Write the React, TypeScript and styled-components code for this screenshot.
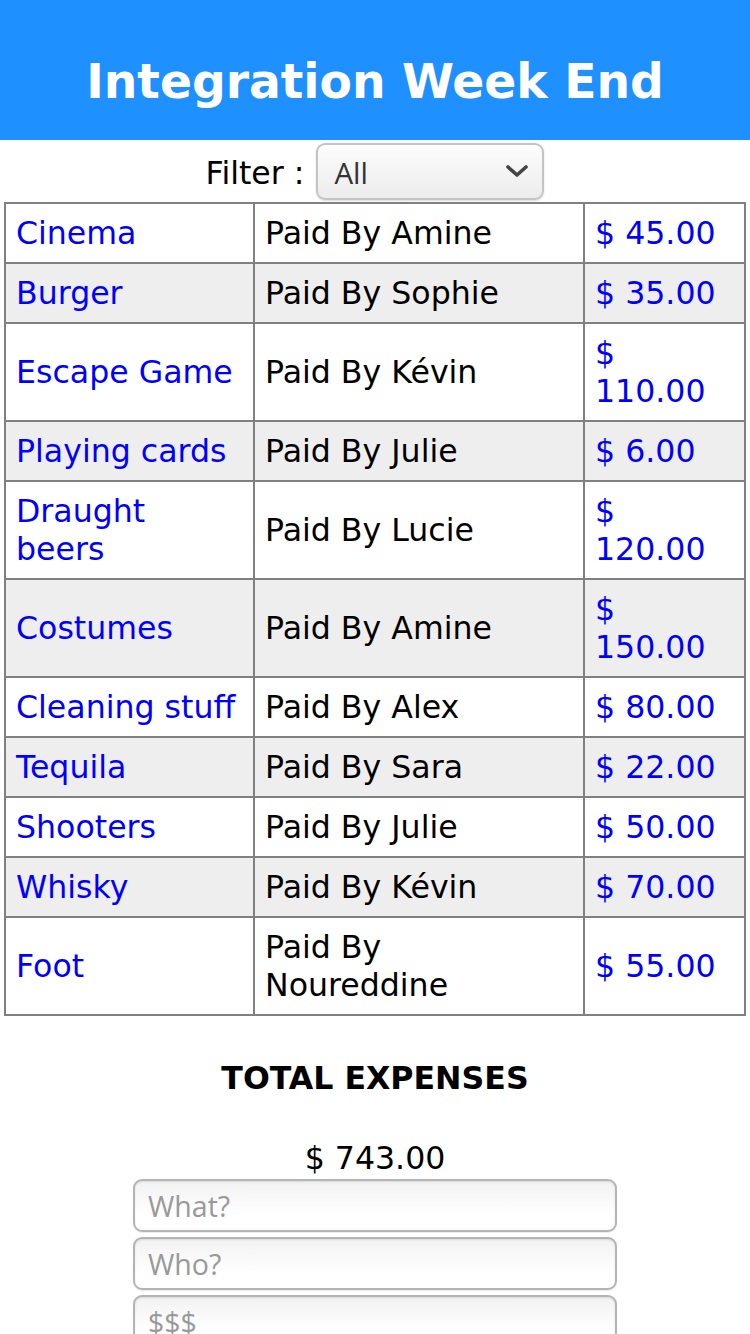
import React from "react";
import styled, { createGlobalStyle } from "styled-components";

const Global = createGlobalStyle`
  html, body { margin: 0; padding: 0; background: #fff; }
  body { font-family: "DejaVu Sans", Verdana, sans-serif; font-size: 31.6px; color: #000; }
  * { box-sizing: border-box; }
`;

const Header = styled.header`
  background: #1e90ff;
  height: 140px;
  padding-top: 54px;
  text-align: center;
`;

const Title = styled.h1`
  margin: 0;
  color: #fff;
  font-size: 47.2px;
  font-weight: bold;
  line-height: normal;
`;

const FilterRow = styled.div`
  display: flex;
  justify-content: center;
  align-items: center;
  gap: 12px;
  padding-top: 3px;
  height: 62px;
`;

const FilterLabel = styled.label`
  font-size: 31.6px;
  line-height: 38px;
`;

const SelectWrap = styled.div`
  position: relative;
  width: 228px;
  height: 57px;
  margin-top: -2px;
`;

const Select = styled.select`
  appearance: none;
  width: 100%;
  height: 100%;
  border: 2px solid #c4c4c4;
  border-radius: 9px;
  background: linear-gradient(#fdfdfd, #ececec);
  box-shadow: 0 1px 2px rgba(0, 0, 0, 0.15);
  font-family: "Open Sans", "Noto Sans", sans-serif;
  font-size: 29.5px;
  color: #333;
  padding: 2px 16px 0;
`;

const Chevron = styled.svg`
  position: absolute;
  right: 15px;
  top: 21px;
  pointer-events: none;
`;

const Table = styled.table`
  border-collapse: collapse;
  table-layout: fixed;
  width: 742px;
  margin: 0 4px;
`;

const Row = styled.tr<{ $striped: boolean }>`
  background: ${(p) => (p.$striped ? "#eeeeee" : "#ffffff")};
`;

const Cell = styled.td<{ $link?: boolean }>`
  border: 2px solid #808080;
  padding: 10px 10px;
  font-size: 31.6px;
  line-height: 38px;
  color: ${(p) => (p.$link ? "#0000ff" : "#000")};
  vertical-align: middle;
`;

const TotalTitle = styled.h2`
  margin: 43px 0 0;
  text-align: center;
  font-size: 31.6px;
  font-weight: bold;
  line-height: 38px;
`;

const TotalValue = styled.div`
  margin-top: 42px;
  text-align: center;
  font-size: 31.6px;
  line-height: 38px;
`;

const Form = styled.form`
  display: flex;
  flex-direction: column;
  align-items: center;
  gap: 5px;
  margin-top: 2px;
`;

const Input = styled.input`
  width: 484px;
  height: 53px;
  border: 2px solid #b4b4b4;
  border-radius: 9px;
  background: linear-gradient(#f2f2f2, #ffffff 70%);
  box-shadow: inset 0 1px 2px rgba(0, 0, 0, 0.1), 0 1px 1px rgba(0, 0, 0, 0.08);
  font-family: "Open Sans", "Noto Sans", sans-serif;
  font-size: 28.5px;
  padding: 0 13px;
  color: #333;
  &::placeholder { color: #999; }
`;

const expenses = [
  ["Cinema", "Amine", "45.00"],
  ["Burger", "Sophie", "35.00"],
  ["Escape Game", "Kévin", "110.00"],
  ["Playing cards", "Julie", "6.00"],
  ["Draught beers", "Lucie", "120.00"],
  ["Costumes", "Amine", "150.00"],
  ["Cleaning stuff", "Alex", "80.00"],
  ["Tequila", "Sara", "22.00"],
  ["Shooters", "Julie", "50.00"],
  ["Whisky", "Kévin", "70.00"],
  ["Foot", "Noureddine", "55.00"],
];

export default function App() {
  return (
    <>
      <Global />
      <Header>
        <Title>Integration Week End</Title>
      </Header>
      <FilterRow>
        <FilterLabel>Filter :</FilterLabel>
        <SelectWrap>
          <Select defaultValue="All">
            <option>All</option>
          </Select>
          <Chevron width="24" height="14" viewBox="0 0 24 14">
            <path d="M3 3 L12 11 L21 3" fill="none" stroke="#444" strokeWidth="3.6" strokeLinecap="round" strokeLinejoin="round" />
          </Chevron>
        </SelectWrap>
      </FilterRow>
      <Table>
        <colgroup>
          <col style={{ width: 249 }} />
          <col style={{ width: 330 }} />
          <col style={{ width: 161 }} />
        </colgroup>
        <tbody>
          {expenses.map(([what, who, amount], i) => (
            <Row key={i} $striped={i % 2 === 1}>
              <Cell $link>{what}</Cell>
              <Cell>Paid By {who}</Cell>
              <Cell $link>$ {amount}</Cell>
            </Row>
          ))}
        </tbody>
      </Table>
      <TotalTitle>TOTAL EXPENSES</TotalTitle>
      <TotalValue>$ 743.00</TotalValue>
      <Form>
        <Input placeholder="What?" />
        <Input placeholder="Who?" />
        <Input placeholder="$$$" />
      </Form>
    </>
  );
}
